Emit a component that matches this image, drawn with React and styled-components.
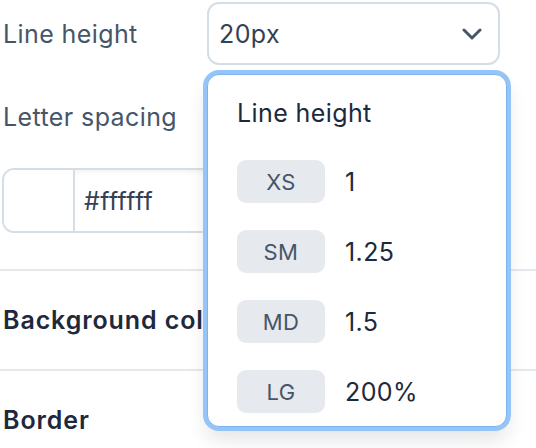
import styled, { createGlobalStyle } from "styled-components";

const GlobalStyle = createGlobalStyle`
  html, body {
    margin: 0;
    background: #ffffff;
  }
  body {
    font-family: Inter, "Noto Sans", sans-serif;
    letter-spacing: 0.4px;
    -webkit-font-smoothing: antialiased;
  }
`;

// Page

const Page = styled.div`
  position: relative;
  width: 536px;
  height: 448px;
  overflow: hidden;
  padding-top: 2px;
  box-sizing: border-box;
`;

const Fields = styled.div`
  display: flex;
  flex-direction: column;
  gap: 20px;
  padding: 0 36px 36px 2px;
`;

const FieldRow = styled.div`
  display: grid;
  grid-template-columns: 205px 1fr;
  align-items: center;
`;

const Label = styled.span`
  font-size: 25px;
  color: #475569;
  padding-left: 1px;
`;

const SelectBox = styled.div`
  display: flex;
  align-items: center;
  justify-content: space-between;
  height: 63px;
  box-sizing: border-box;
  padding: 0 16px 0 10px;
  border: 2px solid #d5dde5;
  border-radius: 12px;
  font-size: 25px;
  color: #334155;
`;

const ColorInput = styled.div`
  display: flex;
  height: 65px;
  box-sizing: border-box;
  border: 2px solid #d5dde5;
  border-radius: 12px;
  overflow: hidden;
`;

const Swatch = styled.div`
  width: 69px;
  background: ${(p) => p.color};
  border-right: 2px solid #d5dde5;
`;

const HexValue = styled.div`
  flex: 1;
  display: flex;
  align-items: center;
  padding-left: 9px;
  font-size: 25px;
  color: #334155;
  background: linear-gradient(#f5f6f8, #ffffff 6px);
`;

const Section = styled.div`
  display: flex;
  align-items: center;
  height: 98px;
  padding-left: 3px;
  border-top: 2px solid #e5e9ee;
  font-size: 25px;
  font-weight: 600;
  letter-spacing: 0.9px;
  color: #1e293b;
  white-space: nowrap;
`;

// Dropdown

const Popup = styled.div`
  position: absolute;
  top: 74px;
  left: 207px;
  width: 300px;
  box-sizing: border-box;
  padding: 23px 0 13px 29px;
  background: #ffffff;
  border: 1px solid #7fb3ee;
  border-radius: 12px;
  box-shadow: 0 0 0 4px #95c5f8, 0 12px 20px rgba(15, 23, 42, 0.12);
`;

const PopupTitle = styled.div`
  font-size: 25px;
  line-height: 30px;
  color: #1e293b;
  margin-bottom: 32px;
`;

const OptionList = styled.div`
  display: flex;
  flex-direction: column;
  gap: 27px;
`;

const Option = styled.div`
  display: flex;
  align-items: center;
  gap: 20px;
`;

const Tag = styled.span`
  display: flex;
  align-items: center;
  justify-content: center;
  width: 88px;
  height: 43px;
  border-radius: 9px;
  background: #e6e9ed;
  font-size: 22px;
  color: #475569;
`;

const OptionValue = styled.span`
  font-size: 25px;
  color: #1e293b;
`;

const Chevron = () => (
  <svg width="20" height="12" viewBox="0 0 20 12" fill="none">
    <path
      d="M2 2l8 8 8-8"
      stroke="#475569"
      strokeWidth="3"
      strokeLinecap="round"
      strokeLinejoin="round"
    />
  </svg>
);

const options = [
  { tag: "XS", value: "1" },
  { tag: "SM", value: "1.25" },
  { tag: "MD", value: "1.5" },
  { tag: "LG", value: "200%" },
];

export default function App() {
  return (
    <Page>
      <GlobalStyle />
      <Fields>
        <FieldRow>
          <Label>Line height</Label>
          <SelectBox>
            20px
            <Chevron />
          </SelectBox>
        </FieldRow>
        <FieldRow>
          <Label>Letter spacing</Label>
          <SelectBox>
            <span />
            <Chevron />
          </SelectBox>
        </FieldRow>
        <ColorInput>
          <Swatch color="#ffffff" />
          <HexValue>#ffffff</HexValue>
        </ColorInput>
      </Fields>
      <Section>Background color</Section>
      <Section>Border</Section>

      <Popup>
        <PopupTitle>Line height</PopupTitle>
        <OptionList>
          {options.map((o) => (
            <Option key={o.tag}>
              <Tag>{o.tag}</Tag>
              <OptionValue>{o.value}</OptionValue>
            </Option>
          ))}
        </OptionList>
      </Popup>
    </Page>
  );
}
